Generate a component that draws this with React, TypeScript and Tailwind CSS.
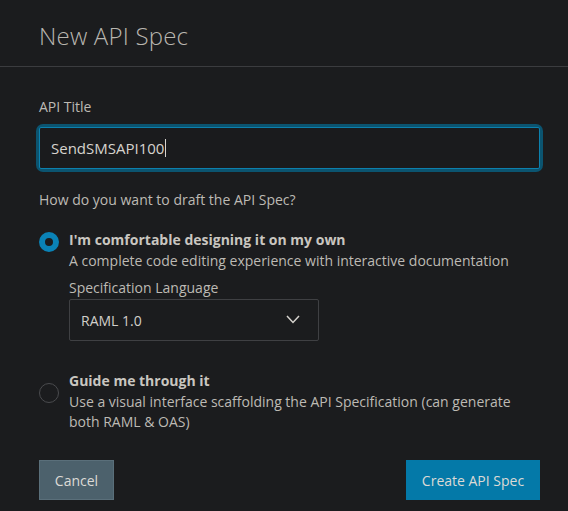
export default function App() {
  return (
    <div
      className="w-[568px] h-[511px] bg-[#1b1c1e] text-[#c5c3bf] overflow-hidden"
      style={{ fontFamily: '"Open Sans", "Noto Sans", sans-serif' }}
    >
      {/* Header */}
      <div className="h-[67px] border-b border-[#3b3c3f] pl-[39px] pt-[20px]">
        <h1 className="text-[24px] font-light text-[#b9b6b0] leading-[32px] tracking-[0.2px]">New API Spec</h1>
      </div>

      <div className="px-[39px] pt-[30px]">
        {/* API Title */}
        <label className="block text-[14px] leading-[20px] text-[#bdbab4]">API Title</label>
        <div className="mt-[10px] rounded-[4px] ring-[3px] ring-[#0b5470] w-[501px]">
          <div className="h-[42px] border border-[#0c80ad] rounded-[2px] bg-[#1a1b1d] flex items-center pl-[11px]">
            <span className="text-[15px] text-[#d6d3ce]">SendSMSAPI100</span>
            <span className="w-px h-[18px] bg-[#d6d3ce] ml-px" />
          </div>
        </div>

        <p className="mt-[21px] text-[14px] leading-[20px] text-[#bdbab4]">How do you want to draft the API Spec?</p>

        {/* Option 1 */}
        <div className="mt-[20px] flex gap-[10px]">
          <div className="w-[20px] h-[20px] mt-[2px] rounded-full border-[6px] border-[#0a82b6] bg-[#1b1c1e] shrink-0" />
          <div>
            <div className="text-[14px] font-bold leading-[20px] text-[#c9c6c0]">I'm comfortable designing it on my own</div>
            <div className="text-[14px] leading-[20px] mt-px text-[#bdbab4]">A complete code editing experience with interactive documentation</div>
            <div className="text-[14px] leading-[20px] mt-[7px] text-[#bdbab4]">Specification Language</div>
            <div className="mt-[1px] w-[250px] h-[42px] border border-[#3f4043] rounded-[2px] flex items-center justify-between pl-[11px] pr-[18px]">
              <span className="text-[14px] text-[#d2cfca]">RAML 1.0</span>
              <svg width="14" height="9" viewBox="0 0 14 9" fill="none" className="mb-[2px]">
                <polyline points="1,1 7,7.5 13,1" stroke="#d6d3ce" strokeWidth="1.5" />
              </svg>
            </div>
          </div>
        </div>

        {/* Option 2 */}
        <div className="mt-[30px] flex gap-[10px]">
          <div className="w-[20px] h-[20px] mt-[12px] rounded-full border border-[#4a4b4e] shrink-0" />
          <div>
            <div className="text-[14px] font-bold leading-[20px] text-[#c9c6c0]">Guide me through it</div>
            <div className="text-[14px] leading-[20px] mt-px text-[#bdbab4]">
              Use a visual interface scaffolding the API Specification (can generate both RAML &amp; OAS)
            </div>
          </div>
        </div>

        {/* Footer buttons */}
        <div className="mt-[28px] flex justify-between w-[501px]">
          <button className="h-[40px] w-[75px] bg-[#4c616c] border border-[#5a6f7a] text-[14px] text-[#dcdad6]">Cancel</button>
          <button className="h-[40px] w-[134px] bg-[#0479a8] text-[14px] text-[#dcdad6]">Create API Spec</button>
        </div>
      </div>
    </div>
  )
}
